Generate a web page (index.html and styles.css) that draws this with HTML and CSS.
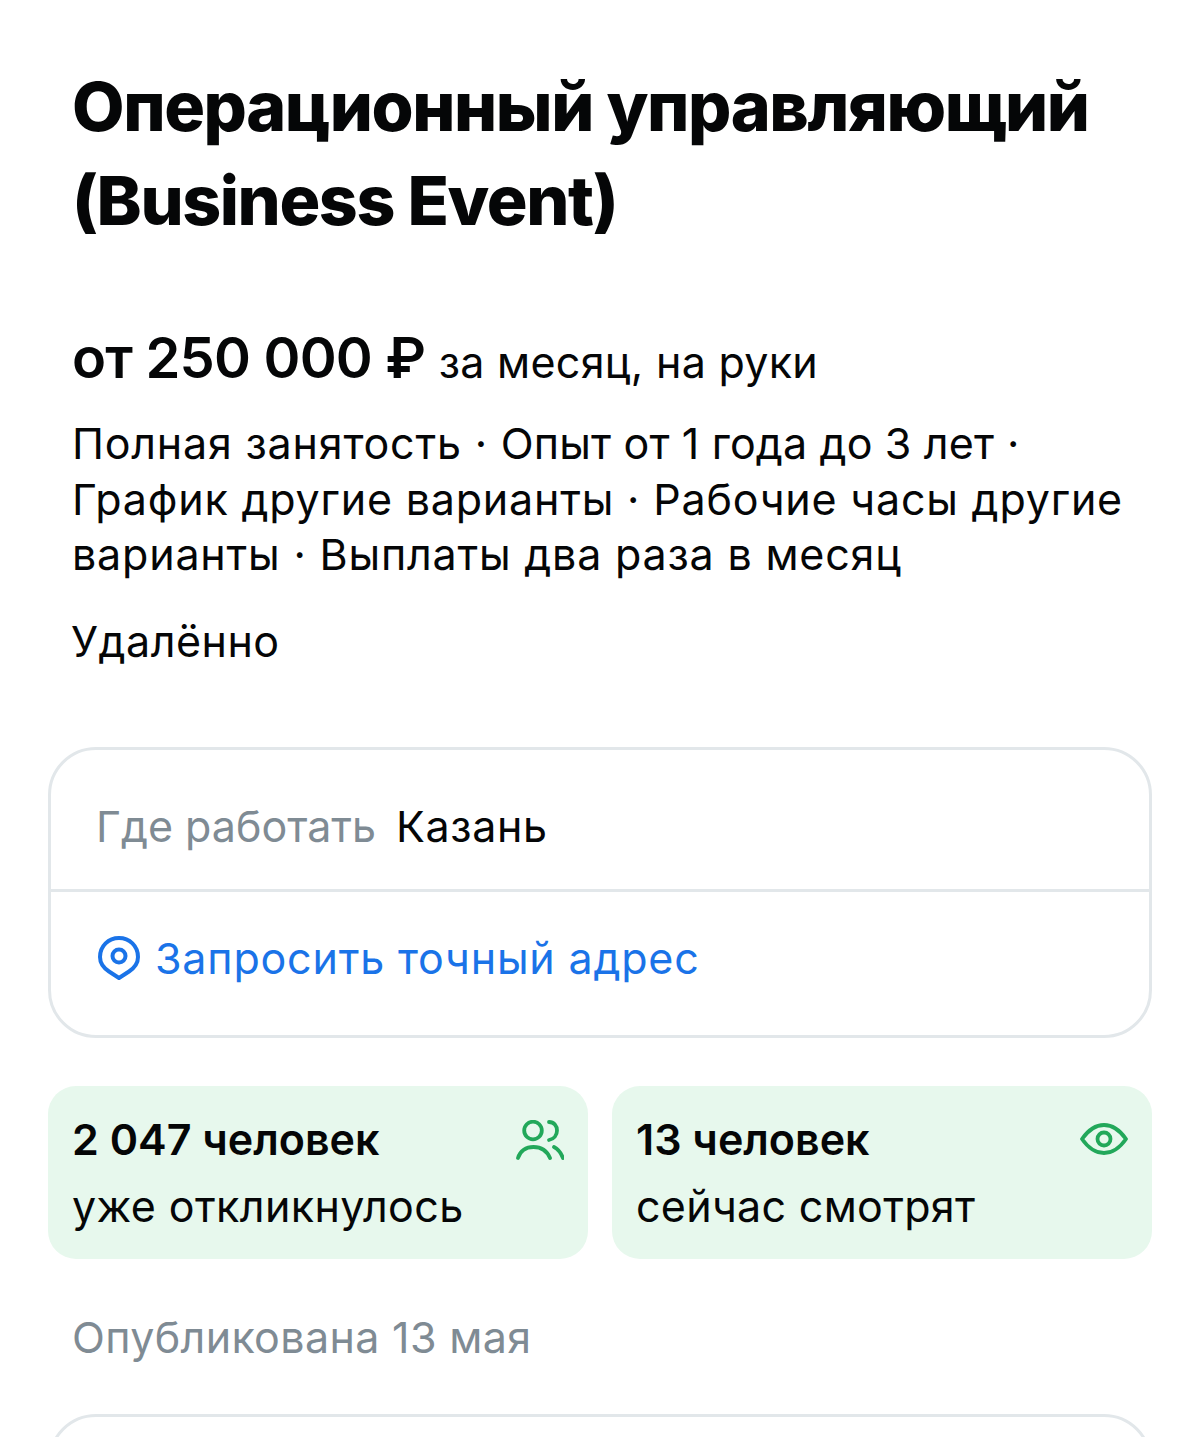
FILE: index.html
```html
<!DOCTYPE html>
<html lang="ru">
<head>
    <title>Операционный управляющий (Business Event)</title>
    <link rel="stylesheet" href="styles.css">
</head>
<body>
<div class="page">
    <h1 class="title">Операционный управляющий<br>(Business Event)</h1>

    <p class="salary"><b>от 250 000 ₽</b> <span class="salary-note">за месяц, на руки</span></p>

    <p class="terms">Полная занятость · <span class="terms-tight">Опыт от 1 года до 3 лет</span> ·<br>График другие варианты · Рабочие часы другие<br>варианты · Выплаты два раза в месяц</p>

    <p class="remote">Удалённо</p>

    <div class="place-card">
        <div class="place-row">
            <span class="place-label">Где работать</span>
            <span class="place-city">Казань</span>
        </div>
        <div class="address-row">
            <svg class="pin-icon" viewBox="0 0 42 44" fill="none" stroke="#1a73e8" stroke-width="4">
                <path d="M21 42 L11 35.5 C5 31.5 2 27 2 21 C2 10 10.5 2 21 2 C31.5 2 40 10 40 21 C40 27 37 31.5 31 35.5 Z" stroke-linejoin="round"/>
                <circle cx="21" cy="20" r="6.5"/>
            </svg>
            <span class="address-link">Запросить точный адрес</span>
        </div>
    </div>

    <div class="stats">
        <div class="stat">
            <div class="stat-text">
                <div class="stat-num">2 047 человек</div>
                <div class="stat-sub stat-sub-left">уже откликнулось</div>
            </div>
            <svg class="stat-icon people-icon" viewBox="0 0 48 40" fill="none" stroke="#22a85a" stroke-width="3.8" stroke-linecap="round">
                <circle cx="17" cy="10.5" r="8.8"/>
                <path d="M33 2 C38 2 41 6 41 10.5 C41 15 38 19 33 20"/>
                <path d="M2 38 C4 31 10 27 17.5 27 C25 27 31 31 34 38"/>
                <path d="M38 27 C42 29 45 33 47 38"/>
            </svg>
        </div>
        <div class="stat">
            <div class="stat-text">
                <div class="stat-num">13 человек</div>
                <div class="stat-sub">сейчас смотрят</div>
            </div>
            <svg class="stat-icon eye-icon" viewBox="0 0 48 32" fill="none" stroke="#22a85a" stroke-width="3.8" stroke-linejoin="round">
                <path d="M2 16 C9 6 16 2 24 2 C32 2 39 6 46 16 C39 26 32 30 24 30 C16 30 9 26 2 16 Z"/>
                <circle cx="24" cy="16" r="6.5"/>
            </svg>
        </div>
    </div>

    <p class="published">Опубликована 13 мая</p>

    <div class="next-card"></div>
</div>
</body>
</html>
```

FILE: styles.css
```css
html, body {
    margin: 0;
    padding: 0;
    background: #fff;
}

body {
    font-family: Inter, "Liberation Sans", Arial, sans-serif;
    color: #050607;
}

.page {
    height: 1437px;
    box-sizing: border-box;
    overflow: hidden;
    padding: 59px 48px 0;
}

p {
    margin: 0;
}

.title {
    margin: 0 0 0 24px;
    font-size: 68px;
    line-height: 94px;
    font-weight: 800;
    letter-spacing: -1.4px;
}

.salary {
    margin: 81px 0 0 24px;
    line-height: 60px;
    white-space: nowrap;
}

.salary b {
    font-size: 56px;
    font-weight: 600;
    letter-spacing: -0.8px;
}

.salary-note {
    font-size: 43px;
    letter-spacing: 0.3px;
    margin-left: 9px;
}

.terms {
    margin: 14px 0 0 24px;
    font-size: 43px;
    letter-spacing: 0.8px;
    line-height: 55.5px;
    white-space: nowrap;
}

.terms-tight {
    letter-spacing: 0.15px;
}

.remote {
    margin: 30px 0 0 23px;
    font-size: 43px;
    letter-spacing: 0.5px;
    line-height: 56px;
}

.place-card {
    margin-top: 78.5px;
    height: 291px;
    box-sizing: border-box;
    border: 3px solid #e2e7ea;
    border-radius: 48px;
}

.place-row {
    height: 142px;
    box-sizing: border-box;
    border-bottom: 3px solid #e2e7ea;
    padding: 12px 45px 0;
    display: flex;
    align-items: center;
    gap: 20px;
    font-size: 43px;
}

.place-label {
    color: #7f8b94;
}

.place-city {
    letter-spacing: 0.6px;
}

.address-row {
    height: 132px;
    padding: 0 47px;
    display: flex;
    align-items: center;
    gap: 15px;
}

.pin-icon {
    width: 42px;
    height: 44px;
}

.address-link {
    font-size: 43px;
    letter-spacing: 0.8px;
    color: #1a73e8;
}

.stats {
    margin-top: 48px;
    display: flex;
    gap: 24px;
}

.stat {
    width: 540px;
    height: 173px;
    box-sizing: border-box;
    background: #e7f8ed;
    border-radius: 28px;
    padding: 24px 24px 0;
    display: flex;
    justify-content: space-between;
}

.stat-num {
    font-size: 43px;
    font-weight: 600;
    line-height: 58px;
}

.stat-sub {
    font-size: 43px;
    letter-spacing: 0.3px;
    line-height: 58px;
    margin-top: 9px;
}

.stat-sub-left {
    letter-spacing: 0.4px;
}

.stat-icon {
    flex: none;
}

.people-icon {
    width: 48px;
    height: 40px;
    margin-top: 10px;
}

.eye-icon {
    width: 48px;
    height: 32px;
    margin-top: 13px;
}

.published {
    margin: 49px 0 0 24px;
    font-size: 43px;
    letter-spacing: 0.35px;
    line-height: 58px;
    color: #7f8b94;
}

.next-card {
    margin-top: 48px;
    height: 100px;
    box-sizing: border-box;
    border: 3px solid #e2e7ea;
    border-radius: 48px;
}
```
